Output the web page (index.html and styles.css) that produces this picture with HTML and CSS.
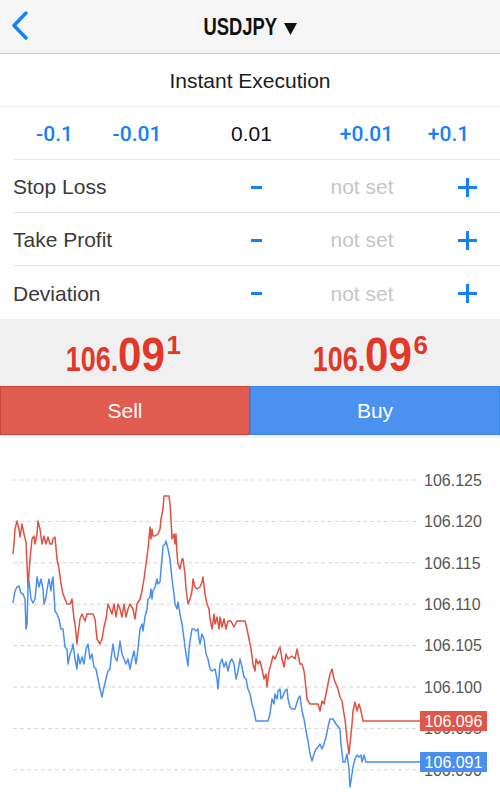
FILE: index.html
```html
<!DOCTYPE html>
<html lang="en">
<head>
    <meta charset="UTF-8">
    <meta name="viewport" content="width=device-width, initial-scale=1.0">
    <title>USDJPY</title>
    <link rel="stylesheet" href="styles.css">
</head>
<body>

    <div class="header">
        <svg class="back" width="20" height="30" viewBox="0 0 20 30">
            <polyline points="15,2 3,14.5 15,27" fill="none" stroke="#1580f8" stroke-width="3.4" stroke-linecap="round" stroke-linejoin="round"/>
        </svg>
        <h1><span class="sym">USDJPY</span><svg class="caret" width="13" height="12" viewBox="0 0 13 12"><polygon points="0,0 13,0 6.5,12" fill="#111"/></svg></h1>
    </div>

    <div class="mode">Instant Execution</div>

    <div class="volume">
        <span class="step">-0.1</span>
        <span class="step">-0.01</span>
        <span class="value">0.01</span>
        <span class="step">+0.01</span>
        <span class="step">+0.1</span>
    </div>

    <div class="row">
        <span class="label">Stop Loss</span>
        <span class="minus"></span>
        <span class="unset">not set</span>
        <span class="plus"></span>
    </div>
    <div class="row">
        <span class="label">Take Profit</span>
        <span class="minus"></span>
        <span class="unset">not set</span>
        <span class="plus"></span>
    </div>
    <div class="row last">
        <span class="label">Deviation</span>
        <span class="minus"></span>
        <span class="unset">not set</span>
        <span class="plus"></span>
    </div>

    <div class="prices">
        <div class="price"><span class="small">106.</span><span class="big">09</span><span class="sup">1</span></div>
        <div class="price"><span class="small">106.</span><span class="big">09</span><span class="sup">6</span></div>
    </div>

    <div class="actions">
        <button class="sell">Sell</button>
        <button class="buy">Buy</button>
    </div>

    <div class="chart">
        <svg width="500" height="360" viewBox="0 439 500 360">
            <g stroke="#d6d6d6" stroke-width="1" stroke-dasharray="4 3">
                <line x1="13" y1="481" x2="417" y2="481"/>
                <line x1="13" y1="522.4" x2="417" y2="522.4"/>
                <line x1="13" y1="563.8" x2="417" y2="563.8"/>
                <line x1="13" y1="605.2" x2="417" y2="605.2"/>
                <line x1="13" y1="646.6" x2="417" y2="646.6"/>
                <line x1="13" y1="688" x2="417" y2="688"/>
                <line x1="13" y1="729.4" x2="417" y2="729.4"/>
                <line x1="13" y1="770.8" x2="417" y2="770.8"/>
            </g>
            <g class="axis">
                <text x="424" y="487">106.125</text>
                <text x="424" y="528">106.120</text>
                <text x="424" y="570">106.115</text>
                <text x="424" y="611">106.110</text>
                <text x="424" y="652">106.105</text>
                <text x="424" y="694">106.100</text>
                <text x="424" y="735">106.095</text>
                <text x="424" y="777">106.090</text>
            </g>
            <polyline fill="none" stroke="#e0513f" stroke-width="1.5" stroke-linejoin="round" points="13,555 14,545 15,530 17,522 19,530 20,538 22,525 24,535 26,543 27,565 28,588 30,560 32,540 34,537 35,545 37,535 38,522 40,530 42,545 44,537 46,545 48,538 50,545 52,545 53,540 55,538 57,560 59,570 61,585 63,595 65,600 67,605 70,605 72,600 74,620 75,625 77,645 78,635 80,620 82,615 85,622 87,615 90,615 93,615 95,620 97,640 100,645 102,640 104,628 106,620 108,605 110,610 112,615 114,605 116,618 118,605 120,610 122,618 124,605 126,618 128,610 130,605 133,610 135,620 137,605 140,600 142,592 144,580 146,565 148,550 149,540 150,528 151,540 152,530 153,537 155,537 158,535 160,530 161,520 163,510 164,497 167,497 169,497 170,505 171,520 172,540 174,535 175,545 176,535 177,555 178,565 180,570 182,560 183,560 185,575 186,590 188,605 190,600 192,592 193,580 195,588 197,590 200,588 202,583 203,578 205,595 207,605 209,610 210,620 212,630 214,615 215,625 217,618 219,630 220,618 222,628 224,620 226,630 228,622 231,622 234,628 237,622 240,622 245,622 247,630 249,640 251,650 253,665 255,672 256,660 258,665 260,662 262,670 264,680 266,675 267,688 269,672 271,665 273,657 275,660 277,655 279,650 280,648 282,660 284,668 286,655 288,660 292,657 295,660 297,650 300,665 302,665 304,672 305,680 307,700 310,705 315,705 318,705 320,712 322,702 324,705 327,690 330,675 332,670 334,680 336,685 338,690 340,698 342,702 344,715 345,720 347,740 349,755 351,735 352,725 353,712 355,703 357,712 359,705 361,712 363,722 420,722"/>
            <polyline fill="none" stroke="#4a8ff0" stroke-width="1.5" stroke-linejoin="round" points="13,604 15,592 17,588 19,587 21,594 23,595 25,600 26,630 27,625 28,590 29,582 31,600 33,604 35,600 36,590 37,578 39,588 41,580 43,590 44,605 46,598 48,585 49,580 51,592 52,582 53,578 55,612 57,615 59,620 61,630 63,630 65,648 67,650 68,665 70,655 72,650 73,645 75,660 77,670 78,655 80,665 82,658 84,665 86,650 88,645 90,660 92,655 94,668 96,670 98,680 100,690 102,698 104,688 106,680 108,672 110,670 111,660 113,645 115,658 117,662 119,650 120,642 122,655 124,660 126,665 128,660 130,670 132,660 134,652 136,665 138,650 140,630 142,625 143,632 145,618 147,610 148,600 150,598 151,590 152,600 153,592 155,588 157,580 158,585 160,583 161,570 162,560 163,547 165,545 166,542 168,550 170,560 172,580 174,595 175,605 177,610 178,603 180,615 182,625 184,640 186,655 188,667 189,650 190,642 192,630 194,630 196,632 198,630 199,640 200,645 202,635 204,640 206,655 208,660 210,670 212,672 215,670 217,680 218,690 220,665 222,660 224,668 226,663 228,672 230,663 232,660 234,665 236,680 238,672 240,660 242,668 244,678 246,680 248,690 250,695 252,705 254,712 256,722 258,722 262,722 266,722 268,722 270,715 272,700 274,705 275,695 277,700 278,692 280,690 281,700 283,697 285,692 287,690 288,700 290,708 292,710 295,710 298,700 300,697 302,712 304,720 306,732 308,742 310,755 312,762 314,755 316,750 318,748 320,745 322,750 324,745 326,738 328,728 330,720 333,720 336,725 340,730 341,745 343,763 345,763 347,755 349,770 350,788 352,775 353,768 355,760 357,756 359,758 361,756 362,763 364,756 366,763 420,763"/>
            <rect x="420" y="712" width="67" height="20" fill="#e0574a"/>
            <text class="tag" x="453.5" y="728">106.096</text>
            <rect x="420" y="753" width="67" height="20" fill="#4a8ff0"/>
            <text class="tag" x="453.5" y="769">106.091</text>
        </svg>
    </div>

</body>
</html>
```

FILE: styles.css
```css
*{
    margin: 0;
    padding: 0;
    box-sizing: border-box;
}

html, body {
    width: 500px;
    height: 799px;
    overflow: hidden;
}

body {
    background-color: white;
    font-family: "Liberation Sans", Arial, sans-serif;
    color: #222;
}

.header{
    height: 54px;
    background-color: #f6f6f6;
    border-bottom: 1px solid #c9c9c9;
    display: flex;
    align-items: center;
    justify-content: center;
    position: relative;
}

.back{
    position: absolute;
    left: 11px;
    top: 11px;
}

.header h1{
    font-weight: bold;
    font-size: 23px;
    color: #111;
    display: flex;
    align-items: center;
    padding-top: 2px;
}

/* no condensed face installed, so squeeze the bold one */
.sym{
    display: inline-block;
    transform: scaleX(0.8);
    transform-origin: right center;
    margin-left: -18px;
}

.caret{
    margin-left: 7px;
    margin-top: 2px;
}

.mode{
    height: 53px;
    border-bottom: 1px solid #ececec;
    display: flex;
    align-items: center;
    justify-content: center;
    font-size: 21px;
    color: #1c1c1c;
    padding-top: 1px;
}

.volume{
    height: 53px;
    margin-left: 13px;
    border-bottom: 1px solid #e6e6e6;
    display: grid;
    grid-template-columns: 83px 82px 147px 83px 81px;
    align-items: center;
    text-align: center;
    font-size: 21px;
    padding-top: 2px;
}

.volume .step{
    font-family: Roboto, "Liberation Sans", sans-serif;
    font-weight: 500;
    color: #1580f8;
}

.volume .value{
    color: #111;
}

.row{
    height: 53px;
    margin-left: 13px;
    border-bottom: 1px solid #e6e6e6;
    display: grid;
    grid-template-columns: 217px 52px 160px 50px;
    align-items: center;
    font-size: 21px;
    padding-top: 2px;
}

.row.last{
    border-bottom: none;
}

.label{
    color: #3a3a3a;
}

.unset{
    color: #c6c6c6;
    text-align: center;
}

.minus{
    justify-self: center;
    width: 11px;
    height: 3px;
    background-color: #1580f8;
}

.plus{
    justify-self: center;
    width: 19px;
    height: 19px;
    position: relative;
}
.plus::before, .plus::after{
    content: "";
    position: absolute;
    background-color: #1580f8;
}
.plus::before{
    left: 0;
    top: 8px;
    width: 19px;
    height: 3px;
}
.plus::after{
    left: 8px;
    top: 0;
    width: 3px;
    height: 19px;
}

.prices{
    height: 67px;
    background-color: #f0f0f0;
    display: flex;
    padding-top: 11px;
    padding-right: 6px;
}

.price{
    flex: 1;
    text-align: center;
    font-weight: bold;
    color: #e2382a;
    line-height: 48px;
}

.price .small{
    display: inline-block;
    font-size: 35px;
    transform: scaleX(0.77);
    transform-origin: right center;
    margin-left: -16px;
}
.price .big{
    display: inline-block;
    font-size: 49px;
    transform: scaleX(0.86);
    transform-origin: left center;
    margin-right: -6px;
}
.price .sup{
    display: inline-block;
    font-size: 26px;
    line-height: 1;
    vertical-align: 17px;
}

.actions{
    display: flex;
    height: 49px;
}

button{
    flex: 1;
    border: 1px solid;
    font-family: "Liberation Sans", Arial, sans-serif;
    font-size: 21px;
    color: white;
}

.sell{
    background-color: #e05c50;
    border-color: #cf4638;
}
.buy{
    background-color: #4b91f0;
    border-color: #3d84ea;
}

.chart{
    border-top: 3px solid #f0f2f5;
}

.chart svg{
    display: block;
}

.axis text{
    font-size: 16px;
    fill: #555;
}

.tag{
    font-size: 16px;
    fill: white;
    text-anchor: middle;
}
```
